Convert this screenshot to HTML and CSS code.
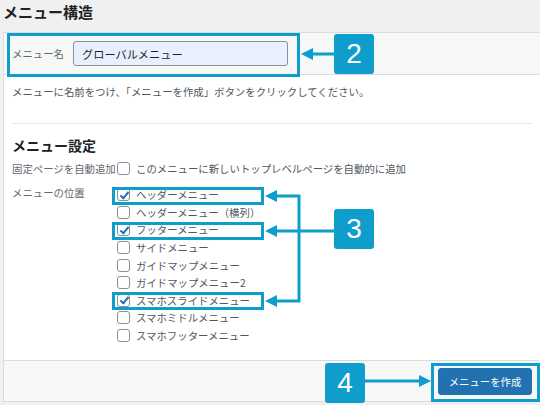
FILE: index.html
```html
<!DOCTYPE html>
<html lang="ja">
<head>
  <meta charset="UTF-8">
  <meta name="viewport" content="width=device-width, initial-scale=1.0">
  <title>メニュー構造</title>
  <link rel="stylesheet" href="styles.css">
</head>
<body>
  <h2 class="title">メニュー構造</h2>

  <div class="panel">
    <div class="panel-head">
      <label class="name-label" for="menu-name">メニュー名</label>
      <input class="name-input" id="menu-name" type="text" value="グローバルメニュー">
    </div>

    <div class="panel-body">
      <p class="desc">メニューに名前をつけ、「メニューを作成」ボタンをクリックしてください。</p>
      <hr class="sep">
      <h3 class="sub">メニュー設定</h3>

      <div class="setting">
        <div class="setting-label">固定ページを自動追加</div>
        <label class="opt"><input type="checkbox" class="cb">このメニューに新しいトップレベルページを自動的に追加</label>
      </div>

      <div class="setting">
        <div class="setting-label pos">メニューの位置</div>
        <div class="opts">
          <label class="opt"><input type="checkbox" class="cb" checked>ヘッダーメニュー</label>
          <label class="opt"><input type="checkbox" class="cb">ヘッダーメニュー（横列）</label>
          <label class="opt"><input type="checkbox" class="cb" checked>フッターメニュー</label>
          <label class="opt"><input type="checkbox" class="cb">サイドメニュー</label>
          <label class="opt"><input type="checkbox" class="cb">ガイドマップメニュー</label>
          <label class="opt"><input type="checkbox" class="cb">ガイドマップメニュー2</label>
          <label class="opt"><input type="checkbox" class="cb" checked>スマホスライドメニュー</label>
          <label class="opt"><input type="checkbox" class="cb">スマホミドルメニュー</label>
          <label class="opt"><input type="checkbox" class="cb">スマホフッターメニュー</label>
        </div>
      </div>
    </div>

    <div class="panel-foot">
      <button class="btn" type="button">メニューを作成</button>
    </div>
  </div>

  <!-- 手順の注釈（枠・矢印・番号） -->
  <svg class="marks" width="540" height="405" viewBox="0 0 540 405">
    <g fill="none" stroke="#0f9dcb" stroke-width="3">
      <rect x="8.5" y="34.5" width="290" height="41"/>
      <rect x="113.5" y="188.5" width="149" height="15"/>
      <rect x="113.5" y="223.5" width="149" height="15"/>
      <rect x="113.5" y="293.5" width="149" height="15"/>
      <rect x="432.5" y="364.5" width="106" height="36"/>
      <line x1="334" y1="54" x2="308" y2="54"/>
      <polyline points="273,196 299,196 299,301 273,301"/>
      <line x1="334" y1="231" x2="273" y2="231"/>
      <line x1="364" y1="381" x2="424" y2="381"/>
    </g>
    <g fill="#0f9dcb">
      <polygon points="301,54 313,48 313,60"/>
      <polygon points="265,196 277,190 277,202"/>
      <polygon points="265,231 277,225 277,237"/>
      <polygon points="265,301 277,295 277,307"/>
      <polygon points="431,381 419,375 419,387"/>
    </g>
  </svg>
  <div class="badge b2">2</div>
  <div class="badge b3">3</div>
  <div class="badge b4">4</div>
</body>
</html>
```

FILE: styles.css
```css
body {
  margin: 0;
  background: #f0f0f1;
  font-family: "Noto Sans CJK JP", "Noto Sans", sans-serif;
  color: #3c434a;
  overflow: hidden;
  width: 540px;
  height: 405px;
}

.title {
  margin: 0;
  padding: 2px 3px 0;
  height: 30px;
  font-size: 15px;
  line-height: 20px;
  font-weight: 700;
  color: #1d2327;
}

.panel {
  margin-left: 3px;
  background: #fff;
  border-left: 1px solid #dcdcde;
  border-top: 1px solid #dcdcde;
  border-bottom: 1px solid #dcdcde;
}

.panel-head {
  height: 41px;
  background: #f6f7f7;
  border-bottom: 1px solid #dcdcde;
  display: flex;
  align-items: center;
  padding-left: 8px;
}

.name-label {
  font-size: 10.4px;
  color: #646970;
  width: 61px;
}

.name-input {
  box-sizing: border-box;
  width: 215px;
  height: 25px;
  margin: 0;
  padding: 0 8px;
  border: 1px solid #8c8f94;
  border-radius: 3px;
  background: #e8f0fe;
  font-family: inherit;
  font-size: 11.2px;
  color: #1d2327;
}

.panel-body {
  padding: 0 8px 16px;
}

.desc {
  margin: 10px 0 0;
  font-size: 10.4px;
  line-height: 14px;
  color: #50575e;
}

.sep {
  margin: 24px 0 0;
  border: 0;
  border-top: 1px solid #e5e5e5;
}

.sub {
  margin: 12px 0 0;
  font-size: 14px;
  line-height: 18px;
  font-weight: 700;
  color: #1d2327;
}

.setting {
  display: flex;
  margin-top: 6px;
}

.setting + .setting {
  margin-top: 8px;
}

.setting-label {
  width: 105px;
  font-size: 10.4px;
  line-height: 18px;
  color: #646970;
  white-space: nowrap;
}

.setting-label.pos {
  line-height: 14px;
}

.opts {
  display: flex;
  flex-direction: column;
}

.opt {
  display: flex;
  align-items: center;
  height: 17.6px;
  font-size: 10.4px;
  color: #50575e;
  white-space: nowrap;
}

.cb {
  appearance: none;
  box-sizing: border-box;
  width: 13px;
  height: 13px;
  margin: 0 6px 0 0;
  border: 1px solid #8c8f94;
  border-radius: 3px;
  background: #fff;
  position: relative;
  flex: none;
}

.cb:checked::after {
  content: "";
  position: absolute;
  left: 3.5px;
  top: 0.5px;
  width: 3px;
  height: 7px;
  border: solid #2271b1;
  border-width: 0 2px 2px 0;
  transform: rotate(40deg);
}

.panel-foot {
  height: 40px;
  background: #f6f7f7;
  border-top: 1px solid #dcdcde;
  display: flex;
  align-items: center;
  justify-content: flex-end;
  padding-right: 8px;
}

.btn {
  width: 94px;
  height: 27px;
  border: 1px solid #2271b1;
  border-radius: 3px;
  background: #2271b1;
  color: #fff;
  font-family: inherit;
  font-size: 10.4px;
  padding: 0;
}

.marks {
  position: absolute;
  left: 0;
  top: 0;
  pointer-events: none;
}

.badge {
  position: absolute;
  width: 40px;
  height: 40px;
  border-radius: 3px;
  background: #0f9dcb;
  color: #fff;
  font-family: "Liberation Sans", Arial, sans-serif;
  font-size: 28px;
  line-height: 40px;
  text-align: center;
}

.b2 { left: 334px; top: 34px; }
.b3 { left: 334px; top: 209px; }
.b4 { left: 325px; top: 363px; }
```
